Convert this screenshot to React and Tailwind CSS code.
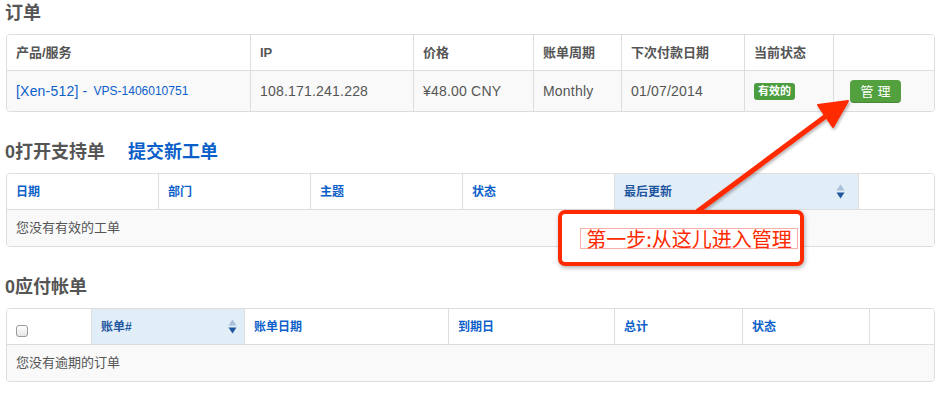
import React from 'react';

const font = { fontFamily: '"Liberation Sans", "Noto Sans CJK SC", sans-serif' };

const SortIcon = () => (
  <svg width="9" height="15" viewBox="0 0 9 15" className="shrink-0">
    <path d="M4.5 0.5 L8.5 6.5 L0.5 6.5 Z" fill="#a9c0d9" />
    <path d="M0.5 8.5 L8.5 8.5 L4.5 14.5 Z" fill="#1f56a0" />
  </svg>
);

const Cell = ({ children, className = '' }) => (
  <div className={`flex items-center px-[9px] border-l border-[#dddddd] first:border-l-0 ${className}`}>
    {children}
  </div>
);

const SectionTitle = ({ children, className = '' }) => (
  <div className={`flex items-center h-[22px] text-[18px] leading-[22px] font-semibold text-[#555555] ${className}`}>
    {children}
  </div>
);

const OrdersTable = () => (
  <div className="border border-[#dddddd] rounded-[4px] overflow-hidden">
    <div className="grid grid-cols-[243px_163px_120px_88px_123px_89px_1fr] h-[36px] border-b border-[#dddddd] bg-white text-[13px] font-bold text-[#555555]">
      <Cell>产品/服务</Cell>
      <Cell>IP</Cell>
      <Cell>价格</Cell>
      <Cell>账单周期</Cell>
      <Cell>下次付款日期</Cell>
      <Cell>当前状态</Cell>
      <Cell></Cell>
    </div>
    <div className="grid grid-cols-[243px_163px_120px_88px_123px_89px_1fr] h-[40px] bg-[#f9f9f9] text-[14px] text-[#555555] tracking-[0.2px]">
      <Cell>
        <span className="text-[#0c5fc9] whitespace-pre">[Xen-512] - </span>
        <span className="text-[#0c5fc9] text-[12px] ml-[2px] tracking-normal">VPS-1406010751</span>
      </Cell>
      <Cell>108.171.241.228</Cell>
      <Cell>¥48.00 CNY</Cell>
      <Cell>Monthly</Cell>
      <Cell>01/07/2014</Cell>
      <Cell>
        <span className="inline-flex items-center h-[17px] px-[4px] rounded-[3px] bg-[#4b9d3e] text-white text-[11px] font-bold leading-none tracking-normal">有效的</span>
      </Cell>
      <Cell className="pl-[16px]">
        <button className="h-[23px] w-[51px] rounded-[4px] bg-[#53a03f] text-white text-[13px] tracking-[4px] pl-[4px] leading-none shadow-[inset_0_-1px_0_rgba(0,0,0,0.15)]">管理</button>
      </Cell>
    </div>
  </div>
);

const TicketsTable = () => (
  <div className="border border-[#dddddd] rounded-[4px] overflow-hidden">
    <div className="grid grid-cols-[151px_152px_152px_152px_244px_1fr] h-[36px] border-b border-[#dddddd] bg-white text-[12px] font-bold text-[#0c5fc9]">
      <Cell>日期</Cell>
      <Cell>部门</Cell>
      <Cell>主题</Cell>
      <Cell>状态</Cell>
      <Cell className="bg-[#e1edf7] justify-between pr-[13px]">
        <span className="text-[#1f56a0]">最后更新</span>
        <SortIcon />
      </Cell>
      <Cell></Cell>
    </div>
    <div className="flex items-center h-[36px] px-[9px] bg-[#f9f9f9] text-[13px] text-[#555555]">您没有有效的工单</div>
  </div>
);

const InvoicesTable = () => (
  <div className="border border-[#dddddd] rounded-[4px] overflow-hidden">
    <div className="grid grid-cols-[84px_153px_204px_166px_128px_127px_1fr] h-[36px] border-b border-[#dddddd] bg-white text-[12px] font-bold text-[#0c5fc9]">
      <Cell className="items-end pb-[7px]">
        <span className="block w-[12px] h-[12px] rounded-[3px] border border-[#9a9a9a] bg-gradient-to-b from-white to-[#e6e6e6]"></span>
      </Cell>
      <Cell className="bg-[#e1edf7] justify-between pr-[7px]">
        <span className="text-[#1f56a0]">账单#</span>
        <SortIcon />
      </Cell>
      <Cell>账单日期</Cell>
      <Cell>到期日</Cell>
      <Cell>总计</Cell>
      <Cell>状态</Cell>
      <Cell></Cell>
    </div>
    <div className="flex items-center h-[36px] px-[9px] bg-[#f9f9f9] text-[13px] text-[#555555]">您没有逾期的订单</div>
  </div>
);

export default function App() {
  return (
    <div className="relative w-[945px] h-[394px] bg-white overflow-hidden" style={font}>
      <div className="w-[929px] ml-[6px] pt-[2px]">
        <SectionTitle className="-ml-[1px]">订单</SectionTitle>
        <div className="mt-[10px]">
          <OrdersTable />
        </div>

        <SectionTitle className="mt-[29px] -ml-[1px]">
          <span>0打开支持单</span>
          <span className="ml-[23px] text-[#0c5fc9]">提交新工单</span>
        </SectionTitle>
        <div className="mt-[10px]">
          <TicketsTable />
        </div>

        <SectionTitle className="mt-[29px] -ml-[1px]">0应付帐单</SectionTitle>
        <div className="mt-[10px]">
          <InvoicesTable />
        </div>
      </div>

      {/* annotation arrow */}
      <svg className="absolute left-0 top-0 pointer-events-none" width="945" height="394" viewBox="0 0 945 394">
        <defs>
          <filter id="sh" x="-20%" y="-20%" width="140%" height="140%">
            <feDropShadow dx="1" dy="2" stdDeviation="1.5" floodColor="#000" floodOpacity="0.3" />
          </filter>
        </defs>
        <g filter="url(#sh)">
          <line x1="698" y1="211" x2="830" y2="113" stroke="#ff2a00" strokeWidth="5" strokeLinecap="round" />
          <path d="M848 101 L818 105 L833 127 Z" fill="#ff2a00" stroke="#ff2a00" strokeWidth="2" strokeLinejoin="round" />
        </g>
      </svg>

      {/* annotation box */}
      <div className="absolute left-[558px] top-[210px] w-[246px] h-[56px] rounded-[7px] border-[4px] border-[#ff2a00] bg-white shadow-[1px_2px_4px_rgba(0,0,0,0.3)]"></div>
      <div className="absolute left-[580px] top-[228px] w-[218px] h-[21px] border border-[#f6b0a8] flex items-center justify-center text-[20px] leading-none text-[#ff2a00] whitespace-nowrap" style={{ fontFamily: '"Noto Sans CJK SC", sans-serif' }}>
        第一步:从这儿进入管理
      </div>
    </div>
  );
}
